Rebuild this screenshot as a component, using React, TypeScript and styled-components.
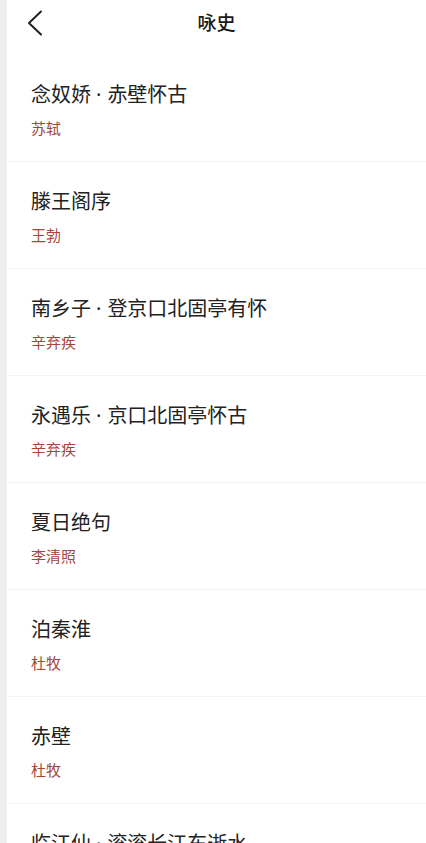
import React from "react";
import styled, { createGlobalStyle } from "styled-components";

const GlobalStyle = createGlobalStyle`
  html, body {
    margin: 0;
    padding: 0;
    background: #ffffff;
  }
  body {
    font-family: "Noto Sans", "Noto Sans CJK SC", sans-serif;
    -webkit-font-smoothing: antialiased;
  }
`;

const Page = styled.div`
  display: flex;
  height: 843px;
  background: #eeeeee;
  padding-left: 7px;
  overflow: hidden;
`;

const Screen = styled.div`
  flex: 1;
  background: #ffffff;
`;

const Header = styled.header`
  position: relative;
  height: 46px;
  display: flex;
  align-items: center;
  justify-content: center;
`;

const BackButton = styled.button`
  position: absolute;
  left: 18px;
  top: 8px;
  width: 20px;
  height: 30px;
  padding: 0;
  border: none;
  background: transparent;
  display: flex;
  align-items: center;
  justify-content: center;
  cursor: pointer;
`;

const Title = styled.h1`
  margin: 0;
  font-size: 19px;
  line-height: 26px;
  font-weight: 500;
  color: #1a1a1a;
`;

const List = styled.ul`
  list-style: none;
  margin: 9px 0 0;
  padding: 0;
`;

const Item = styled.li`
  padding: 28px 24px 23px;
  border-bottom: 1px solid #f3f3f3;
  display: flex;
  flex-direction: column;
  gap: 11px;
`;

const PoemTitle = styled.div`
  font-size: 20px;
  line-height: 24px;
  color: #222222;
  white-space: nowrap;
`;

const Dot = styled.span`
  margin: 0 6px 0 5px;
`;

const Author = styled.div`
  font-size: 15px;
  line-height: 20px;
  color: #a4463b;
`;

const poems = [
  { title: "念奴娇·赤壁怀古", author: "苏轼" },
  { title: "滕王阁序", author: "王勃" },
  { title: "南乡子·登京口北固亭有怀", author: "辛弃疾" },
  { title: "永遇乐·京口北固亭怀古", author: "辛弃疾" },
  { title: "夏日绝句", author: "李清照" },
  { title: "泊秦淮", author: "杜牧" },
  { title: "赤壁", author: "杜牧" },
  { title: "临江仙·滚滚长江东逝水", author: "杨慎" },
];

function renderTitle(title: string) {
  const parts = title.split("·");
  return parts.map((part, i) => (
    <React.Fragment key={i}>
      {i > 0 && <Dot>·</Dot>}
      {part}
    </React.Fragment>
  ));
}

export default function App() {
  return (
    <>
      <GlobalStyle />
      <Page>
        <Screen>
          <Header>
            <BackButton aria-label="返回">
              <svg width="16" height="26" viewBox="0 0 16 26" fill="none">
                <polyline
                  points="14,1.5 2,13 14,24.5"
                  stroke="#222"
                  strokeWidth="2"
                  strokeLinecap="round"
                  strokeLinejoin="round"
                />
              </svg>
            </BackButton>
            <Title>咏史</Title>
          </Header>
          <List>
            {poems.map((p) => (
              <Item key={p.title}>
                <PoemTitle>{renderTitle(p.title)}</PoemTitle>
                <Author>{p.author}</Author>
              </Item>
            ))}
          </List>
        </Screen>
      </Page>
    </>
  );
}
